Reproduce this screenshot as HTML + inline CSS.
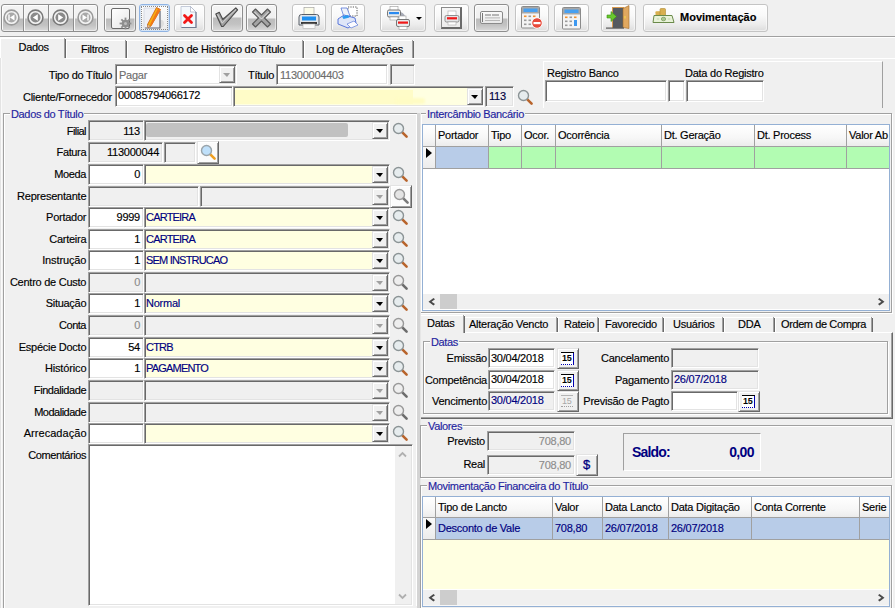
<!DOCTYPE html><html><head><meta charset="utf-8"><style>
*{margin:0;padding:0;box-sizing:border-box}
html,body{width:895px;height:608px;overflow:hidden;background:#f0f0f0;position:relative;font-family:"Liberation Sans",sans-serif;font-size:11px;color:#000}
div,svg{position:absolute}
.t{white-space:pre;line-height:13px;letter-spacing:-0.25px;-webkit-text-stroke:0.15px currentColor}
.sk{border:1px solid;border-color:#a0a0a0 #fff #fff #a0a0a0;box-shadow:inset 1px 1px #696969,inset -1px -1px #e3e3e3}
.rb{border:1px solid;border-color:#e3e3e3 #696969 #696969 #e3e3e3;box-shadow:inset 1px 1px #fff,inset -1px -1px #a0a0a0}
.gb{border:1px solid #a0a0a0;box-shadow:inset 1px 1px #fff,1px 1px #fff}
.tri{width:0;height:0;border-left:4px solid transparent;border-right:3px solid transparent;border-top:4px solid #000}
.ic{overflow:visible}
</style></head><body>
<div style="left:1px;top:4px;width:97px;height:28px;border:1px solid #8e8e8e;border-radius:3px;background:linear-gradient(#f4f4f4 0,#f0f0f0 13px,#bcbcbc 14px,#c2c2c2 20px,#d6d6d6 25px);box-shadow:inset 1px 1px rgba(255,255,255,.9),inset -1px -1px rgba(255,255,255,.5)"></div>
<div style="left:23px;top:5px;width:1px;height:26px;background:#8e8e8e"></div>
<div style="left:24px;top:5px;width:1px;height:26px;background:#f8f8f8"></div>
<div style="left:48px;top:5px;width:1px;height:26px;background:#8e8e8e"></div>
<div style="left:49px;top:5px;width:1px;height:26px;background:#f8f8f8"></div>
<div style="left:73px;top:5px;width:1px;height:26px;background:#8e8e8e"></div>
<div style="left:74px;top:5px;width:1px;height:26px;background:#f8f8f8"></div>
<svg class="ic" style="left:3.2px;top:9.1px" width="17" height="17" viewBox="0 0 17 17"><circle cx="8.5" cy="8.5" r="7.4" fill="#f4f4f4" stroke="#9a9a9a" stroke-width="1.6"/><circle cx="8.5" cy="8.5" r="5.0" fill="#a9a9a9"/><rect x="5.3" y="5.5" width="1.4" height="6" fill="#fff"/><path d="M11.5 5.5 L7 8.5 L11.5 11.5Z" fill="#fff"/></svg>
<svg class="ic" style="left:27.3px;top:9.1px" width="17" height="17" viewBox="0 0 17 17"><circle cx="8.5" cy="8.5" r="7.4" fill="#f4f4f4" stroke="#7a7a7a" stroke-width="1.6"/><circle cx="8.5" cy="8.5" r="5.0" fill="#8a8a8a"/><path d="M10.8 5.2 L5.8 8.5 L10.8 11.8Z" fill="#fff"/></svg>
<svg class="ic" style="left:52.3px;top:9.1px" width="17" height="17" viewBox="0 0 17 17"><circle cx="8.5" cy="8.5" r="7.4" fill="#f4f4f4" stroke="#7a7a7a" stroke-width="1.6"/><circle cx="8.5" cy="8.5" r="5.0" fill="#8a8a8a"/><path d="M6.2 5.2 L11.2 8.5 L6.2 11.8Z" fill="#fff"/></svg>
<svg class="ic" style="left:76.7px;top:9.1px" width="17" height="17" viewBox="0 0 17 17"><circle cx="8.5" cy="8.5" r="7.4" fill="#f4f4f4" stroke="#9a9a9a" stroke-width="1.6"/><circle cx="8.5" cy="8.5" r="5.0" fill="#a9a9a9"/><path d="M5.5 5.5 L10 8.5 L5.5 11.5Z" fill="#fff"/><rect x="10.3" y="5.5" width="1.4" height="6" fill="#fff"/></svg>
<div style="left:104px;top:4px;width:32px;height:28px;border:1px solid #8e8e8e;border-radius:3px;background:linear-gradient(#f4f4f4 0,#f0f0f0 13px,#bcbcbc 14px,#c2c2c2 20px,#d6d6d6 25px);box-shadow:inset 1px 1px rgba(255,255,255,.9),inset -1px -1px rgba(255,255,255,.5)"></div>
<div style="left:111px;top:8px;width:19px;height:21px;background:linear-gradient(135deg,#ffffff,#e6e6e6);border:1px solid #6a6a6a;border-radius:2px"></div>
<svg class="ic" style="left:119px;top:17px" width="13" height="13" viewBox="0 0 13 13"><g fill="#8e8e8e"><circle cx="6.5" cy="6.5" r="3.8"/><rect x="5.6" y="0.6" width="1.8" height="3" transform="rotate(0 6.5 6.5)"/><rect x="5.6" y="0.6" width="1.8" height="3" transform="rotate(45 6.5 6.5)"/><rect x="5.6" y="0.6" width="1.8" height="3" transform="rotate(90 6.5 6.5)"/><rect x="5.6" y="0.6" width="1.8" height="3" transform="rotate(135 6.5 6.5)"/><rect x="5.6" y="0.6" width="1.8" height="3" transform="rotate(180 6.5 6.5)"/><rect x="5.6" y="0.6" width="1.8" height="3" transform="rotate(225 6.5 6.5)"/><rect x="5.6" y="0.6" width="1.8" height="3" transform="rotate(270 6.5 6.5)"/><rect x="5.6" y="0.6" width="1.8" height="3" transform="rotate(315 6.5 6.5)"/></g><circle cx="6.5" cy="6.5" r="1.5" fill="#bdbdbd"/></svg>
<div style="left:139px;top:4px;width:31px;height:28px;border:1px solid #8fb3e3;border-radius:3px;background:linear-gradient(#fdfdfd,#f3f3f3 60%,#e9e9e9);box-shadow:inset 0 0 0 1px #d4e4f6"></div>
<div style="left:141px;top:6px;width:27px;height:24px;border:1px dotted #8a8a8a;"></div>
<svg class="ic" style="left:142px;top:6px" width="26" height="24" viewBox="0 0 26 24"><path d="M17 14 Q22 13 22 18 Q21 22 17 22Z" fill="#dedede"/><path d="M2 2 L15 2 L18 5 L18 22 L2 22Z" fill="#eef0f5" stroke="#c8ccd8" stroke-width=".6"/><path d="M3 22 L18 22 L18 5" fill="none" stroke="#6a6e7a" stroke-width="1.2"/><path d="M14.5 1.5 L18.5 3.5 L9 20 L6 21.5 L5.5 18.5Z" fill="#f8b010" stroke="#d05a10" stroke-width=".8"/><path d="M16 2.5 L18.5 3.8 L9.5 19.5 L8 18.5Z" fill="#f07818"/><path d="M5.5 18.5 L6 21.5 L8.5 20.2Z" fill="#f4e0c0" stroke="#a06030" stroke-width=".5"/></svg>
<div style="left:174px;top:4px;width:31px;height:28px;border:1px solid #c4c4c4;border-radius:3px;background:linear-gradient(#fefefe 0,#f9f9f9 40%,#ececec 75%,#dcdcdc 100%);box-shadow:inset 1px 1px rgba(255,255,255,.9),inset -1px -1px rgba(255,255,255,.5)"></div>
<svg class="ic" style="left:179px;top:5px" width="20" height="24" viewBox="0 0 20 24"><path d="M2 1.5 L11.5 1.5 L17 7 L17 22.5 L2 22.5Z" fill="#f4f8fc" stroke="#b8c0d0" stroke-width=".8"/><path d="M11.5 1.5 L11.5 7 L17 7Z" fill="#ffffff" stroke="#9aa2b8" stroke-width=".6"/><path d="M17 7 L17 22.5 L2.5 22.5" fill="none" stroke="#707a90" stroke-width="1.2"/><path d="M5.5 10.5 L12.5 17.5 M12.5 10.5 L5.5 17.5" stroke="#f21818" stroke-width="2.8" stroke-linecap="round"/></svg>
<div style="left:211px;top:4px;width:32px;height:28px;border:1px solid #8e8e8e;border-radius:3px;background:linear-gradient(#f4f4f4 0,#f0f0f0 12px,#bcbcbc 13px,#c2c2c2 19px,#d6d6d6 25px);box-shadow:inset 1px 1px rgba(255,255,255,.9),inset -1px -1px rgba(255,255,255,.5)"></div>
<svg class="ic" style="left:215px;top:7px" width="24" height="21" viewBox="0 0 24 21"><path d="M0.8 7 L4.3 5.3 L7.8 12.5 L20.8 0.8 L22.6 2.8 L8.2 19.5 L6.6 19.5Z" fill="#a0a0a0" stroke="#4a4a4a" stroke-width="1.1" stroke-linejoin="round"/><path d="M2.5 7.2 L7.2 16 L21 2.5" fill="none" stroke="#dcdcdc" stroke-width=".9"/></svg>
<div style="left:246px;top:4px;width:31px;height:28px;border:1px solid #8e8e8e;border-radius:3px;background:linear-gradient(#f4f4f4 0,#f0f0f0 13px,#bcbcbc 14px,#c2c2c2 20px,#d6d6d6 25px);box-shadow:inset 1px 1px rgba(255,255,255,.9),inset -1px -1px rgba(255,255,255,.5)"></div>
<svg class="ic" style="left:250px;top:7px" width="23" height="22" viewBox="0 0 23 22"><path d="M2.5 5 L5.5 2 L11.5 8 L17.5 2 L20.5 5 L14.5 11 L20.5 17 L17.5 20 L11.5 14 L5.5 20 L2.5 17 L8.5 11Z" fill="#a4a4a4" stroke="#5a5a5a" stroke-width="1.1" stroke-linejoin="round"/><path d="M4.5 5 L11.5 12 L18.5 5" fill="none" stroke="#e4e4e4" stroke-width="1"/></svg>
<div style="left:292px;top:4px;width:34px;height:28px;border:1px solid #c4c4c4;border-radius:3px;background:linear-gradient(#fefefe 0,#f9f9f9 40%,#ececec 75%,#dcdcdc 100%);box-shadow:inset 1px 1px rgba(255,255,255,.9),inset -1px -1px rgba(255,255,255,.5)"></div>
<svg class="ic" style="left:297px;top:6px" width="24" height="24" viewBox="0 0 24 24"><rect x="7" y="1.5" width="10" height="9" fill="#fbfbe8" stroke="#9a9a9a" stroke-width=".6"/><path d="M2 11 Q2 8.5 4.5 8.5 L19.5 8.5 Q22 8.5 22 11 L22 19 L2 19Z" fill="#e2e6ea" stroke="#5a6068" stroke-width="1"/><rect x="5" y="10.5" width="14" height="4" fill="#1e90f0"/><rect x="4" y="16" width="16" height="2" fill="#3a3a3a"/><rect x="6" y="18" width="12" height="4.5" fill="#fafafa" stroke="#b0b0b0" stroke-width=".6"/></svg>
<div style="left:331px;top:4px;width:34px;height:28px;border:1px solid #c4c4c4;border-radius:3px;background:linear-gradient(#fefefe 0,#f9f9f9 40%,#ececec 75%,#dcdcdc 100%);box-shadow:inset 1px 1px rgba(255,255,255,.9),inset -1px -1px rgba(255,255,255,.5)"></div>
<svg class="ic" style="left:336px;top:5px" width="24" height="25" viewBox="0 0 24 25"><rect x="12" y="2" width="9" height="9" fill="#fff" stroke="#444" stroke-width=".9" stroke-dasharray="1.2 1.2"/><path d="M5 3 L11 3 L14 11 L8 12Z" fill="#eef2fa" stroke="#5a7ad8" stroke-width=".8"/><path d="M2 14 L8 10 L19 13 L20 18 L12 23 L2 19Z" fill="#dfe6f8" stroke="#4a6ad8" stroke-width=".9"/><path d="M6 11.5 L12 10 L13.5 12.5 L7.5 14Z" fill="#2a9af0"/><path d="M11 19 L18 16 L22 20 L15 23Z" fill="#fbfbff" stroke="#5a7ad8" stroke-width=".7"/></svg>
<div style="left:380px;top:4px;width:46px;height:28px;border:1px solid #c4c4c4;border-radius:3px;background:linear-gradient(#fefefe 0,#f9f9f9 40%,#ececec 75%,#dcdcdc 100%);box-shadow:inset 1px 1px rgba(255,255,255,.9),inset -1px -1px rgba(255,255,255,.5)"></div>
<svg class="ic" style="left:386px;top:5px" width="26" height="25" viewBox="0 0 26 25"><path d="M8 8 Q18 6 19 17" fill="none" stroke="#a8acb8" stroke-width="3"/><rect x="4" y="1.5" width="8" height="5" fill="#fff" stroke="#9a9a9a" stroke-width=".6"/><rect x="1.5" y="5" width="13" height="7" rx="1.5" fill="#e8eaec" stroke="#6a6a6a" stroke-width=".9"/><rect x="3" y="7" width="10" height="2.2" fill="#2a8af0"/><rect x="4" y="12" width="8" height="3" fill="#fff" stroke="#9a9a9a" stroke-width=".6"/><rect x="13" y="11" width="7" height="4" fill="#fff" stroke="#9a9a9a" stroke-width=".6"/><rect x="10.5" y="14.5" width="13" height="7" rx="1.5" fill="#e8eaec" stroke="#6a6a6a" stroke-width=".9"/><rect x="12" y="16.5" width="10" height="2.2" fill="#f01818"/><rect x="13" y="21.5" width="8" height="3" fill="#fff" stroke="#9a9a9a" stroke-width=".6"/></svg>
<div class="tri" style="left:416px;top:17px;border-left-width:3px;border-right-width:3px;border-top-width:3px"></div>
<div style="left:434px;top:4px;width:35px;height:28px;border:1px solid #c4c4c4;border-radius:3px;background:linear-gradient(#fefefe 0,#f9f9f9 40%,#ececec 75%,#dcdcdc 100%);box-shadow:inset 1px 1px rgba(255,255,255,.9),inset -1px -1px rgba(255,255,255,.5)"></div>
<div style="left:441px;top:7px;width:21px;height:22px;background:linear-gradient(#f6f6f6,#ececec);border:1px solid #8a8a8a;border-right:2px solid #6a6a6a;border-bottom:2px solid #6a6a6a"></div>
<svg class="ic" style="left:444px;top:10px" width="16" height="16" viewBox="0 0 16 16"><rect x="4" y="1" width="8" height="5" fill="#fff" stroke="#aaa" stroke-width=".6"/><rect x="1" y="5.5" width="14" height="6.5" rx="1.5" fill="#e4e6e8" stroke="#7a7a7a" stroke-width=".8"/><rect x="3" y="7.2" width="10" height="2.2" fill="#f01818"/><rect x="4" y="12" width="8" height="3" fill="#fff" stroke="#aaa" stroke-width=".6"/></svg>
<div style="left:474px;top:4px;width:35px;height:28px;border:1px solid #8e8e8e;border-radius:3px;background:linear-gradient(#f4f4f4 0,#f0f0f0 13px,#bcbcbc 14px,#c2c2c2 20px,#d6d6d6 25px);box-shadow:inset 1px 1px rgba(255,255,255,.9),inset -1px -1px rgba(255,255,255,.5)"></div>
<div style="left:480px;top:11px;width:23px;height:13px;background:linear-gradient(#fafafa,#e8e8e8);border:1px solid #8a8a8a;border-radius:2px"></div>
<svg class="ic" style="left:480px;top:11px" width="23" height="13" viewBox="0 0 23 13"><rect x="2" y="2" width="1" height="9" fill="#777"/><rect x="5" y="3.5" width="6" height="1" fill="#777"/><rect x="12" y="3.5" width="7" height="1" fill="#777"/><rect x="5" y="6.5" width="15" height=".8" fill="#aaa"/><rect x="5" y="9" width="15" height=".8" fill="#aaa"/></svg>
<div style="left:515px;top:4px;width:34px;height:28px;border:1px solid #c4c4c4;border-radius:3px;background:linear-gradient(#fefefe 0,#f9f9f9 40%,#ececec 75%,#dcdcdc 100%);box-shadow:inset 1px 1px rgba(255,255,255,.9),inset -1px -1px rgba(255,255,255,.5)"></div>
<svg class="ic" style="left:521px;top:6px" width="20" height="23" viewBox="0 0 20 23"><rect x="0.5" y="0.5" width="18" height="21.5" rx="1" fill="#f4f4f4" stroke="#8a8a8a" stroke-width="1"/><rect x="1" y="1" width="17" height="6.5" fill="#a8a8a8"/><rect x="2.5" y="2.5" width="14" height="3.5" fill="#48a0f0"/><g fill="#9a9a9a"><rect x="3" y="9.5" width="2.5" height="1.6" fill="#f4902a"/><rect x="7.5" y="9.5" width="2.5" height="1.6"/><rect x="12" y="9.5" width="2.5" height="1.6" fill="#f4902a"/><rect x="3" y="13.5" width="2.5" height="1.6"/><rect x="7.5" y="13.5" width="2.5" height="1.6"/><rect x="12" y="13.5" width="2.5" height="1.6"/><rect x="3" y="17.5" width="2.5" height="1.6"/><rect x="7.5" y="17.5" width="2.5" height="1.6"/></g><rect x="12" y="13" width="3" height="6" fill="#3c98f0" opacity="0"/></svg>
<svg class="ic" style="left:531px;top:17px" width="12" height="12" viewBox="0 0 12 12"><circle cx="6" cy="6" r="5.3" fill="#e84a3a" stroke="#fff" stroke-width="1"/><rect x="2.5" y="5" width="7" height="2.2" fill="#fff"/></svg>
<div style="left:554px;top:4px;width:35px;height:28px;border:1px solid #c4c4c4;border-radius:3px;background:linear-gradient(#fefefe 0,#f9f9f9 40%,#ececec 75%,#dcdcdc 100%);box-shadow:inset 1px 1px rgba(255,255,255,.9),inset -1px -1px rgba(255,255,255,.5)"></div>
<svg class="ic" style="left:562px;top:7px" width="20" height="23" viewBox="0 0 20 23"><rect x="0.5" y="0.5" width="18" height="21.5" rx="1" fill="#f4f4f4" stroke="#8a8a8a" stroke-width="1"/><rect x="1" y="1" width="17" height="6.5" fill="#a8a8a8"/><rect x="2.5" y="2.5" width="14" height="3.5" fill="#48a0f0"/><g fill="#9a9a9a"><rect x="3" y="9.5" width="2.5" height="1.6" fill="#f4902a"/><rect x="7.5" y="9.5" width="2.5" height="1.6"/><rect x="12" y="9.5" width="2.5" height="1.6" fill="#f4902a"/><rect x="3" y="13.5" width="2.5" height="1.6"/><rect x="7.5" y="13.5" width="2.5" height="1.6"/><rect x="12" y="13.5" width="2.5" height="1.6"/><rect x="3" y="17.5" width="2.5" height="1.6"/><rect x="7.5" y="17.5" width="2.5" height="1.6"/></g><rect x="12" y="13" width="3" height="6" fill="#3c98f0"/></svg>
<div style="left:601px;top:4px;width:35px;height:28px;border:1px solid #c4c4c4;border-radius:3px;background:linear-gradient(#fefefe 0,#f9f9f9 40%,#ececec 75%,#dcdcdc 100%);box-shadow:inset 1px 1px rgba(255,255,255,.9),inset -1px -1px rgba(255,255,255,.5)"></div>
<svg class="ic" style="left:606px;top:5px" width="26" height="25" viewBox="0 0 26 25"><rect x="6" y="2" width="12" height="21" fill="#d89a50"/><rect x="7" y="3" width="10" height="20" fill="#555a60"/><path d="M17 3.5 L23 0.5 L23 23.5 L17 22.5Z" fill="#e0a860" stroke="#a06a2a" stroke-width=".6"/><rect x="18.5" y="11" width="1" height="2.5" fill="#f8e040"/><path d="M1 10 L5 10 L5 6.5 L10.5 11.5 L5 16.5 L5 13 L1 13Z" fill="#6ac830" stroke="#3a9010" stroke-width=".6"/><rect x="0" y="22.5" width="18" height="1.2" fill="#5a5a5a"/></svg>
<div style="left:643px;top:4px;width:125px;height:28px;border:1px solid #c4c4c4;border-radius:3px;background:linear-gradient(#fefefe 0,#f9f9f9 40%,#ececec 75%,#dcdcdc 100%);box-shadow:inset 1px 1px rgba(255,255,255,.9),inset -1px -1px rgba(255,255,255,.5)"></div>
<svg class="ic" style="left:652px;top:8px" width="25" height="17" viewBox="0 0 25 17"><ellipse cx="6.5" cy="4.5" rx="3" ry="1.2" fill="#e0c060"/><rect x="3.5" y="3.5" width="6" height="5" fill="#d8b050"/><rect x="8" y="0.5" width="5.5" height="8" rx="1" fill="#d8b050" stroke="#b08a30" stroke-width=".6"/><path d="M2 7.5 L20 7.5 L22 14.5 L1 14.5Z" fill="#e8f2d8" stroke="#6a8a4a" stroke-width="1"/><ellipse cx="11.5" cy="11" rx="2.2" ry="1.8" fill="#a8c890" stroke="#6a8a4a" stroke-width=".6"/><ellipse cx="6" cy="11" rx="1.5" ry=".8" fill="#c8dab8"/><ellipse cx="17" cy="11" rx="1.5" ry=".8" fill="#c8dab8"/></svg>
<div class="t" style="left:680px;top:11px;font-weight:bold;font-size:11px;letter-spacing:0;line-height:13px">Movimentação</div>
<div style="left:0;top:36px;width:895px;height:1px;background:#a0a0a0"></div>
<div style="left:0;top:37px;width:895px;height:1px;background:#fff"></div>
<div style="left:0;top:58px;width:895px;height:1px;background:#fff"></div>
<div style="left:66px;top:40px;width:61px;height:18px;border-top:1px solid #fff;border-left:1px solid #fff;background:#f0f0f0"></div>
<div style="left:125px;top:40px;width:1px;height:18px;background:#a0a0a0"></div>
<div style="left:126px;top:41px;width:1px;height:17px;background:#696969"></div>
<div class="t" style="left:81px;top:43px;letter-spacing:-0.32px">Filtros</div>
<div style="left:127px;top:40px;width:177px;height:18px;border-top:1px solid #fff;border-left:1px solid #fff;background:#f0f0f0"></div>
<div style="left:302px;top:40px;width:1px;height:18px;background:#a0a0a0"></div>
<div style="left:303px;top:41px;width:1px;height:17px;background:#696969"></div>
<div class="t" style="left:144.5px;top:43px;letter-spacing:-0.23px">Registro de Histórico do Título</div>
<div style="left:304px;top:40px;width:110px;height:18px;border-top:1px solid #fff;border-left:1px solid #fff;background:#f0f0f0"></div>
<div style="left:412px;top:40px;width:1px;height:18px;background:#a0a0a0"></div>
<div style="left:413px;top:41px;width:1px;height:17px;background:#696969"></div>
<div class="t" style="left:316px;top:43px;letter-spacing:-0.05px">Log de Alterações</div>
<div style="left:0;top:38px;width:66px;height:21px;border-top:1px solid #fff;border-left:1px solid #fff;background:#f0f0f0"></div>
<div style="left:64px;top:38px;width:1px;height:20px;background:#a0a0a0"></div>
<div style="left:65px;top:39px;width:1px;height:19px;background:#696969"></div>
<div class="t" style="left:18.5px;top:41px;letter-spacing:-0.30px">Dados</div>
<div class="t" style="left:-188px;top:69px;width:300px;text-align:right;">Tipo do Título</div>
<div class="sk" style="left:115px;top:64px;width:122px;height:21px;background:#fff;"></div>
<div class="t" style="left:119px;top:69px;color:#6d6d6d;">Pagar</div>
<div class="rb" style="left:219px;top:66px;width:16px;height:17px;background:#f0f0f0;"></div>
<div class="tri" style="left:223px;top:73px;border-top-color:#a0a0a0"></div>
<div class="t" style="left:248px;top:69px;">Título</div>
<div class="sk" style="left:276px;top:64px;width:112px;height:21px;background:#fff;"></div>
<div class="t" style="left:280px;top:69px;color:#6d6d6d;">11300004403</div>
<div class="sk" style="left:390px;top:64px;width:25px;height:21px;background:#f0f0f0;"></div>
<div class="t" style="left:-188px;top:91px;width:300px;text-align:right;">Cliente/Fornecedor</div>
<div class="sk" style="left:115px;top:86px;width:118px;height:21px;background:#fff;"></div>
<div class="t" style="left:118px;top:89px;">00085794066172</div>
<div class="sk" style="left:233px;top:86px;width:251px;height:21px;background:#ffffe1;"></div>
<div style="left:235px;top:90px;width:178px;height:14px;background:#fffcc8;filter:blur(0.6px)"></div>
<div style="left:395px;top:98px;width:30px;height:6px;background:#fffcc4;filter:blur(1px);border-radius:3px"></div>
<div class="rb" style="left:467px;top:88px;width:16px;height:17px;background:#f0f0f0;"></div>
<div class="tri" style="left:471px;top:95px;border-top-color:#000"></div>
<div class="sk" style="left:485px;top:86px;width:29px;height:21px;background:#f0f0f0;"></div>
<div class="t" style="left:489px;top:90px;color:#000040;">113</div>
<svg class="ic" style="left:517px;top:89px" width="17" height="17" viewBox="0 0 17 17"><line x1="9.8" y1="9.8" x2="14.6" y2="14.6" stroke="#b8642c" stroke-width="2.6" stroke-linecap="round"/><circle cx="6.5" cy="6.5" r="5" fill="#e6ecee" stroke="#8c9496" stroke-width="1.4"/></svg>
<div style="left:543px;top:61px;width:340px;height:47px;border:1px solid;border-bottom:0;border-color:#fff #a0a0a0 #a0a0a0 #fff"></div>
<div class="t" style="left:547px;top:67px;">Registro Banco</div>
<div class="t" style="left:685px;top:67px;">Data do Registro</div>
<div class="sk" style="left:545px;top:80px;width:122px;height:22px;background:#fff;"></div>
<div class="sk" style="left:668px;top:80px;width:17px;height:22px;background:#fff;"></div>
<div class="sk" style="left:686px;top:80px;width:78px;height:22px;background:#fff;"></div>
<div style="left:0;top:58px;width:1px;height:550px;background:#e3e3e3"></div>
<div style="left:1px;top:58px;width:1px;height:550px;background:#fafafa"></div>
<div class="gb" style="left:3px;top:113px;width:415px;height:496px;"></div>
<div class="t" style="left:10px;top:108px;color:#1f1f9f;background:#f0f0f0;padding:0 1px;letter-spacing:-0.35px">Dados do Título</div>
<div style="left:416px;top:114px;width:1px;height:492px;background:#fff"></div>
<div class="t" style="left:-214.07875px;top:125px;width:300px;text-align:right;letter-spacing:-0.58px">Filial</div>
<div class="t" style="left:-213.8825px;top:146px;width:300px;text-align:right;letter-spacing:-0.38px">Fatura</div>
<div class="t" style="left:-213.8640625px;top:168px;width:300px;text-align:right;letter-spacing:-0.36px">Moeda</div>
<div class="t" style="left:-213.7265625px;top:190px;width:300px;text-align:right;letter-spacing:-0.23px">Representante</div>
<div class="t" style="left:-213.74553571428572px;top:211px;width:300px;text-align:right;letter-spacing:-0.25px">Portador</div>
<div class="t" style="left:-213.775px;top:233px;width:300px;text-align:right;letter-spacing:-0.27px">Carteira</div>
<div class="t" style="left:-213.61015625px;top:254px;width:300px;text-align:right;letter-spacing:-0.11px">Instrução</div>
<div class="t" style="left:-213.75401785714286px;top:276px;width:300px;text-align:right;letter-spacing:-0.25px">Centro de Custo</div>
<div class="t" style="left:-213.77767857142857px;top:297px;width:300px;text-align:right;letter-spacing:-0.28px">Situação</div>
<div class="t" style="left:-213.96875px;top:319px;width:300px;text-align:right;letter-spacing:-0.47px">Conta</div>
<div class="t" style="left:-213.75572916666667px;top:341px;width:300px;text-align:right;letter-spacing:-0.26px">Espécie Docto</div>
<div class="t" style="left:-213.64765625px;top:362px;width:300px;text-align:right;letter-spacing:-0.15px">Histórico</div>
<div class="t" style="left:-213.920625px;top:384px;width:300px;text-align:right;letter-spacing:-0.42px">Findalidade</div>
<div class="t" style="left:-214.01180555555555px;top:406px;width:300px;text-align:right;letter-spacing:-0.51px">Modalidade</div>
<div class="t" style="left:-213.460625px;top:427px;width:300px;text-align:right;letter-spacing:0.04px">Arrecadação</div>
<div class="t" style="left:-213.91750000000002px;top:449px;width:300px;text-align:right;letter-spacing:-0.42px">Comentários</div>
<div class="sk" style="left:88px;top:120px;width:56px;height:21px;background:#f0f0f0;"></div>
<div class="t" style="left:-160px;top:125px;width:300px;text-align:right;color:#000;">113</div>
<div class="sk" style="left:144px;top:120px;width:246px;height:21px;background:#f0f0f0;"></div>
<div class="rb" style="left:372px;top:122px;width:16px;height:17px;background:#f0f0f0;"></div>
<div class="tri" style="left:376px;top:129px;border-top-color:#000"></div>
<svg class="ic" style="left:392px;top:122px" width="17" height="17" viewBox="0 0 17 17"><line x1="9.8" y1="9.8" x2="14.6" y2="14.6" stroke="#b8642c" stroke-width="2.6" stroke-linecap="round"/><circle cx="6.5" cy="6.5" r="5" fill="#e6ecee" stroke="#8c9496" stroke-width="1.4"/></svg>
<div style="left:146px;top:123px;width:202px;height:14px;background:#c1c1c1;filter:blur(0.6px);border-radius:2px"></div>
<div class="sk" style="left:88px;top:142px;width:75px;height:21px;background:#f0f0f0;"></div>
<div class="t" style="left:-141px;top:146px;width:300px;text-align:right;">113000044</div>
<div class="sk" style="left:164px;top:142px;width:32px;height:21px;background:#f0f0f0;"></div>
<div class="rb" style="left:197px;top:141px;width:22px;height:23px;background:#fbfbfb;"></div>
<svg class="ic" style="left:200px;top:144px" width="17" height="17" viewBox="0 0 17 17"><line x1="9.8" y1="9.8" x2="14.6" y2="14.6" stroke="#f0a020" stroke-width="2.6" stroke-linecap="round"/><circle cx="6.5" cy="6.5" r="5" fill="#bfe0fa" stroke="#9aa4aa" stroke-width="1.4"/></svg>
<div class="sk" style="left:88px;top:164px;width:56px;height:21px;background:#fff;"></div>
<div class="t" style="left:-160px;top:168px;width:300px;text-align:right;color:#000;">0</div>
<div class="sk" style="left:144px;top:164px;width:246px;height:21px;background:#ffffe1;"></div>
<div class="rb" style="left:372px;top:166px;width:16px;height:17px;background:#f0f0f0;"></div>
<div class="tri" style="left:376px;top:173px;border-top-color:#000"></div>
<svg class="ic" style="left:392px;top:166px" width="17" height="17" viewBox="0 0 17 17"><line x1="9.8" y1="9.8" x2="14.6" y2="14.6" stroke="#b8642c" stroke-width="2.6" stroke-linecap="round"/><circle cx="6.5" cy="6.5" r="5" fill="#e6ecee" stroke="#8c9496" stroke-width="1.4"/></svg>
<div class="sk" style="left:88px;top:186px;width:111px;height:21px;background:#f0f0f0;"></div>
<div class="sk" style="left:200px;top:186px;width:190px;height:21px;background:#f0f0f0;"></div>
<div class="rb" style="left:372px;top:188px;width:16px;height:17px;background:#f0f0f0;"></div>
<div class="tri" style="left:376px;top:195px;border-top-color:#a0a0a0"></div>
<div class="rb" style="left:390px;top:185px;width:22px;height:23px;background:#fbfbfb;"></div>
<svg class="ic" style="left:393px;top:188px" width="17" height="17" viewBox="0 0 17 17"><line x1="9.8" y1="9.8" x2="14.6" y2="14.6" stroke="#7a7a7a" stroke-width="2.6" stroke-linecap="round"/><circle cx="6.5" cy="6.5" r="5" fill="#e4e4e4" stroke="#9a9a9a" stroke-width="1.4"/></svg>
<div class="sk" style="left:88px;top:207px;width:56px;height:21px;background:#fff;"></div>
<div class="t" style="left:-160px;top:211px;width:300px;text-align:right;color:#000;">9999</div>
<div class="sk" style="left:144px;top:207px;width:246px;height:21px;background:#ffffe1;"></div>
<div class="t" style="left:146px;top:211px;color:#000080;letter-spacing:-0.8px;">CARTEIRA</div>
<div class="rb" style="left:372px;top:209px;width:16px;height:17px;background:#f0f0f0;"></div>
<div class="tri" style="left:376px;top:216px;border-top-color:#000"></div>
<svg class="ic" style="left:392px;top:209px" width="17" height="17" viewBox="0 0 17 17"><line x1="9.8" y1="9.8" x2="14.6" y2="14.6" stroke="#b8642c" stroke-width="2.6" stroke-linecap="round"/><circle cx="6.5" cy="6.5" r="5" fill="#e6ecee" stroke="#8c9496" stroke-width="1.4"/></svg>
<div class="sk" style="left:88px;top:229px;width:56px;height:21px;background:#fff;"></div>
<div class="t" style="left:-160px;top:233px;width:300px;text-align:right;color:#000;">1</div>
<div class="sk" style="left:144px;top:229px;width:246px;height:21px;background:#ffffe1;"></div>
<div class="t" style="left:146px;top:233px;color:#000080;letter-spacing:-0.8px;">CARTEIRA</div>
<div class="rb" style="left:372px;top:231px;width:16px;height:17px;background:#f0f0f0;"></div>
<div class="tri" style="left:376px;top:238px;border-top-color:#000"></div>
<svg class="ic" style="left:392px;top:231px" width="17" height="17" viewBox="0 0 17 17"><line x1="9.8" y1="9.8" x2="14.6" y2="14.6" stroke="#b8642c" stroke-width="2.6" stroke-linecap="round"/><circle cx="6.5" cy="6.5" r="5" fill="#e6ecee" stroke="#8c9496" stroke-width="1.4"/></svg>
<div class="sk" style="left:88px;top:250px;width:56px;height:21px;background:#fff;"></div>
<div class="t" style="left:-160px;top:254px;width:300px;text-align:right;color:#000;">1</div>
<div class="sk" style="left:144px;top:250px;width:246px;height:21px;background:#ffffe1;"></div>
<div class="t" style="left:146px;top:254px;color:#000080;letter-spacing:-0.8px;">SEM INSTRUCAO</div>
<div class="rb" style="left:372px;top:252px;width:16px;height:17px;background:#f0f0f0;"></div>
<div class="tri" style="left:376px;top:259px;border-top-color:#000"></div>
<svg class="ic" style="left:392px;top:252px" width="17" height="17" viewBox="0 0 17 17"><line x1="9.8" y1="9.8" x2="14.6" y2="14.6" stroke="#b8642c" stroke-width="2.6" stroke-linecap="round"/><circle cx="6.5" cy="6.5" r="5" fill="#e6ecee" stroke="#8c9496" stroke-width="1.4"/></svg>
<div class="sk" style="left:88px;top:272px;width:56px;height:21px;background:#f0f0f0;"></div>
<div class="t" style="left:-160px;top:276px;width:300px;text-align:right;color:#8c8c8c;">0</div>
<div class="sk" style="left:144px;top:272px;width:246px;height:21px;background:#f0f0f0;"></div>
<div class="rb" style="left:372px;top:274px;width:16px;height:17px;background:#f0f0f0;"></div>
<div class="tri" style="left:376px;top:281px;border-top-color:#a0a0a0"></div>
<svg class="ic" style="left:392px;top:274px" width="17" height="17" viewBox="0 0 17 17"><line x1="9.8" y1="9.8" x2="14.6" y2="14.6" stroke="#6c6c6c" stroke-width="2.6" stroke-linecap="round"/><circle cx="6.5" cy="6.5" r="5" fill="#eeeeee" stroke="#999" stroke-width="1.4"/></svg>
<div class="sk" style="left:88px;top:293px;width:56px;height:21px;background:#fff;"></div>
<div class="t" style="left:-160px;top:297px;width:300px;text-align:right;color:#000;">1</div>
<div class="sk" style="left:144px;top:293px;width:246px;height:21px;background:#ffffe1;"></div>
<div class="t" style="left:146px;top:297px;color:#000080;">Normal</div>
<div class="rb" style="left:372px;top:295px;width:16px;height:17px;background:#f0f0f0;"></div>
<div class="tri" style="left:376px;top:302px;border-top-color:#000"></div>
<svg class="ic" style="left:392px;top:295px" width="17" height="17" viewBox="0 0 17 17"><line x1="9.8" y1="9.8" x2="14.6" y2="14.6" stroke="#b8642c" stroke-width="2.6" stroke-linecap="round"/><circle cx="6.5" cy="6.5" r="5" fill="#e6ecee" stroke="#8c9496" stroke-width="1.4"/></svg>
<div class="sk" style="left:88px;top:315px;width:56px;height:21px;background:#f0f0f0;"></div>
<div class="t" style="left:-160px;top:319px;width:300px;text-align:right;color:#8c8c8c;">0</div>
<div class="sk" style="left:144px;top:315px;width:246px;height:21px;background:#f0f0f0;"></div>
<div class="rb" style="left:372px;top:317px;width:16px;height:17px;background:#f0f0f0;"></div>
<div class="tri" style="left:376px;top:324px;border-top-color:#a0a0a0"></div>
<svg class="ic" style="left:392px;top:317px" width="17" height="17" viewBox="0 0 17 17"><line x1="9.8" y1="9.8" x2="14.6" y2="14.6" stroke="#6c6c6c" stroke-width="2.6" stroke-linecap="round"/><circle cx="6.5" cy="6.5" r="5" fill="#eeeeee" stroke="#999" stroke-width="1.4"/></svg>
<div class="sk" style="left:88px;top:337px;width:56px;height:21px;background:#fff;"></div>
<div class="t" style="left:-160px;top:341px;width:300px;text-align:right;color:#000;">54</div>
<div class="sk" style="left:144px;top:337px;width:246px;height:21px;background:#ffffe1;"></div>
<div class="t" style="left:146px;top:341px;color:#000080;letter-spacing:-0.8px;">CTRB</div>
<div class="rb" style="left:372px;top:339px;width:16px;height:17px;background:#f0f0f0;"></div>
<div class="tri" style="left:376px;top:346px;border-top-color:#000"></div>
<svg class="ic" style="left:392px;top:339px" width="17" height="17" viewBox="0 0 17 17"><line x1="9.8" y1="9.8" x2="14.6" y2="14.6" stroke="#b8642c" stroke-width="2.6" stroke-linecap="round"/><circle cx="6.5" cy="6.5" r="5" fill="#e6ecee" stroke="#8c9496" stroke-width="1.4"/></svg>
<div class="sk" style="left:88px;top:358px;width:56px;height:21px;background:#fff;"></div>
<div class="t" style="left:-160px;top:362px;width:300px;text-align:right;color:#000;">1</div>
<div class="sk" style="left:144px;top:358px;width:246px;height:21px;background:#ffffe1;"></div>
<div class="t" style="left:146px;top:362px;color:#000080;letter-spacing:-0.8px;">PAGAMENTO</div>
<div class="rb" style="left:372px;top:360px;width:16px;height:17px;background:#f0f0f0;"></div>
<div class="tri" style="left:376px;top:367px;border-top-color:#000"></div>
<svg class="ic" style="left:392px;top:360px" width="17" height="17" viewBox="0 0 17 17"><line x1="9.8" y1="9.8" x2="14.6" y2="14.6" stroke="#b8642c" stroke-width="2.6" stroke-linecap="round"/><circle cx="6.5" cy="6.5" r="5" fill="#e6ecee" stroke="#8c9496" stroke-width="1.4"/></svg>
<div class="sk" style="left:88px;top:380px;width:56px;height:21px;background:#f0f0f0;"></div>
<div class="sk" style="left:144px;top:380px;width:246px;height:21px;background:#f0f0f0;"></div>
<div class="rb" style="left:372px;top:382px;width:16px;height:17px;background:#f0f0f0;"></div>
<div class="tri" style="left:376px;top:389px;border-top-color:#a0a0a0"></div>
<svg class="ic" style="left:392px;top:382px" width="17" height="17" viewBox="0 0 17 17"><line x1="9.8" y1="9.8" x2="14.6" y2="14.6" stroke="#6c6c6c" stroke-width="2.6" stroke-linecap="round"/><circle cx="6.5" cy="6.5" r="5" fill="#eeeeee" stroke="#999" stroke-width="1.4"/></svg>
<div class="sk" style="left:88px;top:402px;width:56px;height:21px;background:#f0f0f0;"></div>
<div class="sk" style="left:144px;top:402px;width:246px;height:21px;background:#f0f0f0;"></div>
<div class="rb" style="left:372px;top:404px;width:16px;height:17px;background:#f0f0f0;"></div>
<div class="tri" style="left:376px;top:411px;border-top-color:#a0a0a0"></div>
<svg class="ic" style="left:392px;top:404px" width="17" height="17" viewBox="0 0 17 17"><line x1="9.8" y1="9.8" x2="14.6" y2="14.6" stroke="#6c6c6c" stroke-width="2.6" stroke-linecap="round"/><circle cx="6.5" cy="6.5" r="5" fill="#eeeeee" stroke="#999" stroke-width="1.4"/></svg>
<div class="sk" style="left:88px;top:423px;width:56px;height:21px;background:#fff;"></div>
<div class="sk" style="left:144px;top:423px;width:246px;height:21px;background:#ffffe1;"></div>
<div class="rb" style="left:372px;top:425px;width:16px;height:17px;background:#f0f0f0;"></div>
<div class="tri" style="left:376px;top:432px;border-top-color:#000"></div>
<svg class="ic" style="left:392px;top:425px" width="17" height="17" viewBox="0 0 17 17"><line x1="9.8" y1="9.8" x2="14.6" y2="14.6" stroke="#b8642c" stroke-width="2.6" stroke-linecap="round"/><circle cx="6.5" cy="6.5" r="5" fill="#e6ecee" stroke="#8c9496" stroke-width="1.4"/></svg>
<div class="sk" style="left:88px;top:444px;width:325px;height:162px;background:#fff;"></div>
<div style="left:395px;top:446px;width:16px;height:158px;background:#f0f0f0"></div>
<svg class="ic" style="left:398px;top:451px" width="9" height="7" viewBox="0 0 9 7"><path d="M1 5.5 L4.5 2 L8 5.5" fill="none" stroke="#b0b0b0" stroke-width="1.8"/></svg>
<svg class="ic" style="left:398px;top:593px" width="9" height="7" viewBox="0 0 9 7"><path d="M1 1.5 L4.5 5 L8 1.5" fill="none" stroke="#b0b0b0" stroke-width="1.8"/></svg>
<div class="gb" style="left:420px;top:113px;width:472px;height:200px;"></div>
<div class="t" style="left:426px;top:108px;color:#1f1f9f;background:#f0f0f0;padding:0 1px;letter-spacing:-0.35px">Intercâmbio Bancário</div>
<div style="left:422px;top:124px;width:468px;height:187px;border:1px solid #94b0d4;background:#fff;overflow:hidden"></div>
<div style="left:423px;top:125px;width:466px;height:21px;background:linear-gradient(#ffffff 0,#f7f7f7 60%,#ececec 100%)"></div>
<div style="left:423px;top:146px;width:466px;height:1px;background:#a0a0a0"></div>
<div style="left:423px;top:147px;width:466px;height:21px;background:#b2fcb2"></div>
<div style="left:423px;top:147px;width:12px;height:21px;background:linear-gradient(#fafafa,#ececec)"></div>
<div style="left:436px;top:147px;width:52px;height:21px;background:#b8cce8"></div>
<div style="left:423px;top:168px;width:466px;height:1px;background:#a0a0a0"></div>
<div style="left:435px;top:125px;width:1px;height:43px;background:#a0a0a0"></div>
<div style="left:488px;top:125px;width:1px;height:43px;background:#a0a0a0"></div>
<div style="left:521px;top:125px;width:1px;height:43px;background:#a0a0a0"></div>
<div style="left:555px;top:125px;width:1px;height:43px;background:#a0a0a0"></div>
<div style="left:661px;top:125px;width:1px;height:43px;background:#a0a0a0"></div>
<div style="left:754px;top:125px;width:1px;height:43px;background:#a0a0a0"></div>
<div style="left:846px;top:125px;width:1px;height:43px;background:#a0a0a0"></div>
<div style="left:426px;top:148px;width:0;height:0;border-top:5px solid transparent;border-bottom:5px solid transparent;border-left:6px solid #000"></div>
<div class="t" style="left:438px;top:129px;">Portador</div>
<div class="t" style="left:491px;top:129px;">Tipo</div>
<div class="t" style="left:524px;top:129px;">Ocor.</div>
<div class="t" style="left:558px;top:129px;">Ocorrência</div>
<div class="t" style="left:664px;top:129px;">Dt. Geração</div>
<div class="t" style="left:757px;top:129px;">Dt. Process</div>
<div class="t" style="left:849px;top:129px;">Valor Ab</div>
<div style="left:423px;top:294px;width:466px;height:15px;background:#f0f0f0"></div>
<div style="left:440px;top:294px;width:17px;height:15px;background:#cdcdcd"></div>
<svg class="ic" style="left:428px;top:297.5px" width="7" height="8" viewBox="0 0 7 8"><path d="M5.5 0 L0.5 3.7 L5.5 7.4 L7 6.1 L3.6 3.7 L7 1.3Z" fill="#4a4a4a"/></svg>
<svg class="ic" style="left:878px;top:297.5px" width="7" height="8" viewBox="0 0 7 8"><path d="M1.5 0 L6.5 3.7 L1.5 7.4 L0 6.1 L3.4 3.7 L0 1.3Z" fill="#4a4a4a"/></svg>
<div style="left:419px;top:332px;width:474px;height:87px;border:1px solid;border-color:#fff #696969 #696969 #fff;box-shadow:inset -1px -1px #a0a0a0"></div>
<div style="left:464px;top:317px;width:94px;height:15px;border-top:1px solid #fff;border-left:1px solid #fff"></div>
<div style="left:556px;top:317px;width:1px;height:15px;background:#a0a0a0"></div>
<div style="left:557px;top:318px;width:1px;height:14px;background:#696969"></div>
<div class="t" style="left:469px;top:318px;">Alteração Vencto</div>
<div style="left:558px;top:317px;width:41px;height:15px;border-top:1px solid #fff;border-left:1px solid #fff"></div>
<div style="left:597px;top:317px;width:1px;height:15px;background:#a0a0a0"></div>
<div style="left:598px;top:318px;width:1px;height:14px;background:#696969"></div>
<div class="t" style="left:564px;top:318px;">Rateio</div>
<div style="left:599px;top:317px;width:65px;height:15px;border-top:1px solid #fff;border-left:1px solid #fff"></div>
<div style="left:662px;top:317px;width:1px;height:15px;background:#a0a0a0"></div>
<div style="left:663px;top:318px;width:1px;height:14px;background:#696969"></div>
<div class="t" style="left:605px;top:318px;">Favorecido</div>
<div style="left:664px;top:317px;width:60px;height:15px;border-top:1px solid #fff;border-left:1px solid #fff"></div>
<div style="left:722px;top:317px;width:1px;height:15px;background:#a0a0a0"></div>
<div style="left:723px;top:318px;width:1px;height:14px;background:#696969"></div>
<div class="t" style="left:673px;top:318px;letter-spacing:-0.23px">Usuários</div>
<div style="left:724px;top:317px;width:51px;height:15px;border-top:1px solid #fff;border-left:1px solid #fff"></div>
<div style="left:773px;top:317px;width:1px;height:15px;background:#a0a0a0"></div>
<div style="left:774px;top:318px;width:1px;height:14px;background:#696969"></div>
<div class="t" style="left:738px;top:318px;">DDA</div>
<div style="left:775px;top:317px;width:98px;height:15px;border-top:1px solid #fff;border-left:1px solid #fff"></div>
<div style="left:871px;top:317px;width:1px;height:15px;background:#a0a0a0"></div>
<div style="left:872px;top:318px;width:1px;height:14px;background:#696969"></div>
<div class="t" style="left:781px;top:318px;letter-spacing:-0.40px">Ordem de Compra</div>
<div style="left:419px;top:315px;width:46px;height:19px;border-top:1px solid #fff;border-left:1px solid #fff;background:#f0f0f0"></div>
<div style="left:463px;top:315px;width:1px;height:18px;background:#a0a0a0"></div>
<div style="left:464px;top:316px;width:1px;height:17px;background:#696969"></div>
<div class="t" style="left:427px;top:317px;">Datas</div>
<div class="gb" style="left:423px;top:341px;width:465px;height:73px;"></div>
<div class="t" style="left:430px;top:336px;color:#1f1f9f;background:#f0f0f0;padding:0 1px;letter-spacing:-0.35px">Datas</div>
<div style="left:417px;top:113px;width:3px;height:495px;background:#d4d4d4"></div>
<div style="left:420px;top:113px;width:1px;height:495px;background:#e6e6e6"></div>
<div class="t" style="left:187px;top:352px;width:300px;text-align:right;">Emissão</div>
<div class="sk" style="left:488px;top:348px;width:67px;height:20px;background:#fff;"></div>
<div class="t" style="left:491px;top:352px;color:#000;">30/04/2018</div>
<div class="t" style="left:187px;top:374px;width:300px;text-align:right;">Competência</div>
<div class="sk" style="left:488px;top:370px;width:67px;height:20px;background:#fff;"></div>
<div class="t" style="left:491px;top:373px;color:#000;">30/04/2018</div>
<div class="t" style="left:187px;top:395px;width:300px;text-align:right;">Vencimento</div>
<div class="sk" style="left:488px;top:391px;width:67px;height:20px;background:#f0f0f0;"></div>
<div class="t" style="left:491px;top:394px;color:#000080;">30/04/2018</div>
<div class="rb" style="left:557px;top:348px;width:22px;height:21px;background:#f0f0f0;"></div>
<div style="left:561px;top:352px;width:13px;height:1px;background:#000"></div>
<div style="left:561px;top:353px;width:13px;height:12px;background:#fff;border-right:1px solid #0000b0;border-bottom:1px dotted #0000b0"></div>
<div class="t" style="left:562px;top:354px;color:#000;font-size:9px;line-height:9px;letter-spacing:-0.2px;font-weight:bold;-webkit-text-stroke:0">15</div>
<div class="rb" style="left:557px;top:370px;width:22px;height:21px;background:#f0f0f0;"></div>
<div style="left:561px;top:374px;width:13px;height:1px;background:#000"></div>
<div style="left:561px;top:375px;width:13px;height:12px;background:#fff;border-right:1px solid #0000b0;border-bottom:1px dotted #0000b0"></div>
<div class="t" style="left:562px;top:376px;color:#000;font-size:9px;line-height:9px;letter-spacing:-0.2px;font-weight:bold;-webkit-text-stroke:0">15</div>
<div class="rb" style="left:557px;top:391px;width:22px;height:21px;background:#f0f0f0;"></div>
<div style="left:561px;top:395px;width:12px;height:1px;background:#b4b4b4"></div>
<div style="left:561px;top:406px;width:12px;height:1px;border-bottom:1px dotted #a0a0a0"></div>
<div class="t" style="left:562px;top:397px;color:#a8a8a8;font-size:9px;line-height:9px;letter-spacing:-0.2px;-webkit-text-stroke:0">15</div>
<div class="t" style="left:369px;top:352px;width:300px;text-align:right;">Cancelamento</div>
<div class="sk" style="left:671px;top:348px;width:88px;height:20px;background:#f0f0f0;"></div>
<div class="t" style="left:369px;top:374px;width:300px;text-align:right;">Pagamento</div>
<div class="sk" style="left:671px;top:370px;width:88px;height:20px;background:#f0f0f0;"></div>
<div class="t" style="left:674px;top:373px;color:#000080;">26/07/2018</div>
<div class="t" style="left:369px;top:395px;width:300px;text-align:right;">Previsão de Pagto</div>
<div class="sk" style="left:671px;top:391px;width:67px;height:20px;background:#fff;"></div>
<div class="rb" style="left:738px;top:391px;width:22px;height:21px;background:#f0f0f0;"></div>
<div style="left:742px;top:395px;width:13px;height:1px;background:#000"></div>
<div style="left:742px;top:396px;width:13px;height:12px;background:#fff;border-right:1px solid #0000b0;border-bottom:1px dotted #0000b0"></div>
<div class="t" style="left:743px;top:397px;color:#000;font-size:9px;line-height:9px;letter-spacing:-0.2px;font-weight:bold;-webkit-text-stroke:0">15</div>
<div class="gb" style="left:420px;top:425px;width:472px;height:53px;"></div>
<div class="t" style="left:427px;top:420px;color:#1f1f9f;background:#f0f0f0;padding:0 1px;letter-spacing:-0.35px">Valores</div>
<div class="t" style="left:185px;top:435px;width:300px;text-align:right;">Previsto</div>
<div class="sk" style="left:487px;top:431px;width:88px;height:20px;background:#f0f0f0;"></div>
<div class="t" style="left:271px;top:435px;width:300px;text-align:right;color:#8c8c8c;">708,80</div>
<div class="t" style="left:185px;top:458px;width:300px;text-align:right;">Real</div>
<div class="sk" style="left:487px;top:455px;width:88px;height:20px;background:#f0f0f0;"></div>
<div class="t" style="left:271px;top:459px;width:300px;text-align:right;color:#8c8c8c;">708,80</div>
<div class="rb" style="left:576px;top:454px;width:22px;height:22px;background:#f0f0f0;"></div>
<div class="t" style="left:583px;top:458px;color:#000080;font-size:13px;line-height:14px;-webkit-text-stroke:0.3px #000080">$</div>
<div style="left:623px;top:433px;width:138px;height:38px;border:1px solid;border-color:#a0a0a0 #fff #fff #a0a0a0"></div>
<div class="t" style="left:632px;top:445px;color:#000080;font-weight:bold;font-size:14px;line-height:15px;letter-spacing:-0.8px;-webkit-text-stroke:0">Saldo:</div>
<div class="t" style="left:454px;top:445px;width:300px;text-align:right;color:#000080;font-weight:bold;font-size:14px;line-height:15px;letter-spacing:-0.6px;-webkit-text-stroke:0">0,00</div>
<div class="gb" style="left:420px;top:485px;width:472px;height:124px;"></div>
<div class="t" style="left:427px;top:480px;color:#1f1f9f;background:#f0f0f0;padding:0 1px;letter-spacing:-0.35px">Movimentação Financeira do Título</div>
<div style="left:422px;top:496px;width:468px;height:111px;border:1px solid #94b0d4;background:#ffffe1;overflow:hidden"></div>
<div style="left:423px;top:497px;width:466px;height:20px;background:linear-gradient(#ffffff 0,#f7f7f7 60%,#ececec 100%)"></div>
<div style="left:423px;top:517px;width:466px;height:1px;background:#a0a0a0"></div>
<div style="left:423px;top:518px;width:466px;height:21px;background:#b8cce8"></div>
<div style="left:423px;top:518px;width:12px;height:21px;background:linear-gradient(#fafafa,#ececec)"></div>
<div style="left:423px;top:539px;width:466px;height:1px;background:#a0a0a0"></div>
<div style="left:435px;top:497px;width:1px;height:42px;background:#a0a0a0"></div>
<div style="left:552px;top:497px;width:1px;height:42px;background:#a0a0a0"></div>
<div style="left:602px;top:497px;width:1px;height:42px;background:#a0a0a0"></div>
<div style="left:668px;top:497px;width:1px;height:42px;background:#a0a0a0"></div>
<div style="left:751px;top:497px;width:1px;height:42px;background:#a0a0a0"></div>
<div style="left:859px;top:497px;width:1px;height:42px;background:#a0a0a0"></div>
<div style="left:426px;top:519px;width:0;height:0;border-top:5px solid transparent;border-bottom:5px solid transparent;border-left:6px solid #000"></div>
<div class="t" style="left:438px;top:501px;">Tipo de Lancto</div>
<div class="t" style="left:555px;top:501px;">Valor</div>
<div class="t" style="left:605px;top:501px;">Data Lancto</div>
<div class="t" style="left:671px;top:501px;">Data Digitação</div>
<div class="t" style="left:754px;top:501px;">Conta Corrente</div>
<div class="t" style="left:862px;top:501px;">Serie</div>
<div class="t" style="left:438px;top:522px;color:#000080;">Desconto de Vale</div>
<div class="t" style="left:555px;top:522px;color:#000080;">708,80</div>
<div class="t" style="left:605px;top:522px;color:#000080;">26/07/2018</div>
<div class="t" style="left:671px;top:522px;color:#000080;">26/07/2018</div>
<div style="left:423px;top:589px;width:466px;height:1px;background:#fff"></div>
<div style="left:423px;top:590px;width:466px;height:15px;background:#f0f0f0"></div>
<div style="left:423px;top:605px;width:466px;height:1px;background:#f8f8f8"></div>
<div style="left:440px;top:590px;width:17px;height:15px;background:#cdcdcd"></div>
<svg class="ic" style="left:428px;top:593.5px" width="7" height="8" viewBox="0 0 7 8"><path d="M5.5 0 L0.5 3.7 L5.5 7.4 L7 6.1 L3.6 3.7 L7 1.3Z" fill="#4a4a4a"/></svg>
<svg class="ic" style="left:878px;top:593.5px" width="7" height="8" viewBox="0 0 7 8"><path d="M1.5 0 L6.5 3.7 L1.5 7.4 L0 6.1 L3.4 3.7 L0 1.3Z" fill="#4a4a4a"/></svg>
</body></html>
